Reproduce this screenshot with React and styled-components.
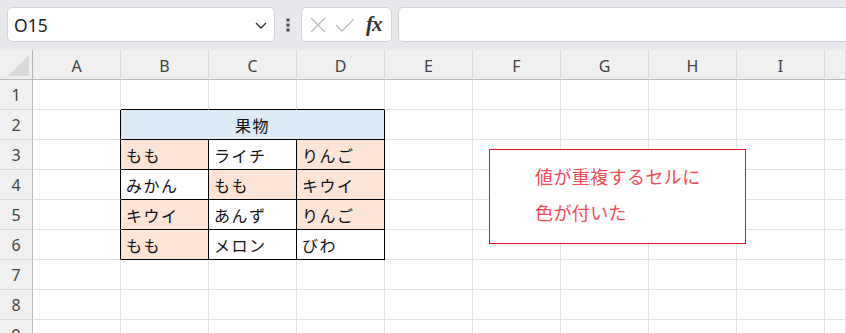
import React from "react";
import styled, { createGlobalStyle } from "styled-components";

const Global = createGlobalStyle`
  html, body { margin: 0; padding: 0; background: #fff; overflow: hidden; }
  body { font-family: "Noto Sans", "Noto Sans CJK JP", sans-serif; }
`;

const Page = styled.div`
  width: 846px;
  height: 333px;
  overflow: hidden;
  position: relative;
  background: #fff;
`;

const Toolbar = styled.div`
  height: 50px;
  background: #e8e9ec;
  display: flex;
  align-items: flex-start;
  padding: 7px 0 0 7px;
  box-sizing: border-box;
`;

const NameBox = styled.div`
  width: 268px;
  height: 35px;
  box-sizing: border-box;
  background: #fff;
  border: 1px solid #d3d4d7;
  border-radius: 5px;
  display: flex;
  align-items: center;
  justify-content: space-between;
  padding: 0 6px 0 6px;
  font-family: "Noto Sans", sans-serif;
  font-size: 17.5px;
  color: #222;
`;

const Dots = styled.div`
  width: 26px;
  height: 35px;
  display: flex;
  align-items: center;
  justify-content: center;
`;

const FxBox = styled.div`
  width: 91px;
  height: 35px;
  box-sizing: border-box;
  background: #fff;
  border: 1px solid #d3d4d7;
  border-radius: 5px;
  display: flex;
  align-items: center;
  padding: 0 0 0 6px;
  gap: 6px;
`;

const Fx = styled.span`
  font-family: "Liberation Serif", "DejaVu Serif", serif;
  font-style: italic;
  font-weight: bold;
  font-size: 21px;
  color: #333;
  margin-left: 4px;
  letter-spacing: -1px;
`;

const FormulaBar = styled.div`
  flex: 1;
  margin-left: 6px;
  height: 35px;
  box-sizing: border-box;
  background: #fff;
  border: 1px solid #d3d4d7;
  border-right: none;
  border-radius: 5px 0 0 5px;
`;

const Sheet = styled.div`
  display: grid;
  grid-template-columns: 33px repeat(9, 88px) 1fr;
  grid-template-rows: repeat(10, 30px) 1fr;
  height: 283px;
`;

const ColHead = styled.div`
  background: #f0f0f0;
  border-right: 1px solid #d9d9d9;
  border-bottom: 1px solid #b9b9b9;
  display: flex;
  align-items: center;
  justify-content: center;
  font-family: "Noto Sans", sans-serif;
  font-size: 16px;
  color: #444;
  padding-top: 2px;
  box-sizing: border-box;
`;

const Corner = styled.div`
  background: #f0f0f0;
  border-right: 1px solid #b9b9b9;
  border-bottom: 1px solid #b9b9b9;
  box-sizing: border-box;
`;

const RowHead = styled.div`
  background: #f0f0f0;
  border-right: 1px solid #b9b9b9;
  border-bottom: 1px solid #d9d9d9;
  display: flex;
  align-items: center;
  justify-content: center;
  font-family: "Noto Sans", sans-serif;
  font-size: 16px;
  color: #444;
  box-sizing: border-box;
`;

const Cell = styled.div`
  grid-column: span ${(p) => p.$span || 1};
  background: ${(p) => p.$bg || "#fff"};
  border-right: 1px solid ${(p) => (p.$r ? "#000" : "#e1e1e1")};
  border-bottom: 1px solid ${(p) => (p.$b ? "#000" : "#e1e1e1")};
  box-sizing: border-box;
  display: flex;
  align-items: center;
  justify-content: ${(p) => (p.$center ? "center" : "flex-start")};
  padding-left: ${(p) => (p.$center ? "0" : "5px")};
  font-family: "Noto Sans CJK JP", sans-serif;
  font-size: 16px;
  letter-spacing: 1.5px;
  color: #111;
  white-space: nowrap;
  overflow: hidden;
`;

const Callout = styled.div`
  position: absolute;
  left: 489px;
  top: 149px;
  width: 257px;
  height: 95px;
  box-sizing: border-box;
  border: 1px solid #e81123;
  background: #fff;
  padding: 8px 0 0 45px;
  font-family: "Noto Sans CJK JP", sans-serif;
  font-size: 18px;
  letter-spacing: 0.4px;
  line-height: 36px;
  color: #f04a56;
`;

const cols = ["A", "B", "C", "D", "E", "F", "G", "H", "I", ""];

const PEACH = "#fce4d6";
const table = [
  [["もも", true], ["ライチ", false], ["りんご", true]],
  [["みかん", false], ["もも", true], ["キウイ", true]],
  [["キウイ", true], ["あんず", false], ["りんご", true]],
  [["もも", true], ["メロン", false], ["びわ", false]],
];

function Row({ n }) {
  const cells = [];
  if (n === 1) {
    cols.forEach((c, i) => {
      cells.push(<Cell key={i} $b={i >= 1 && i <= 3} />);
    });
  } else if (n === 2) {
    cells.push(<Cell key="a" $r />);
    cells.push(
      <Cell key="m" $span={3} $bg="#ddebf7" $r $b $center>
        果物
      </Cell>
    );
    for (let i = 4; i < cols.length; i++) cells.push(<Cell key={i} />);
  } else if (n >= 3 && n <= 6) {
    const row = table[n - 3];
    cells.push(<Cell key="a" $r />);
    row.forEach(([t, hl], i) =>
      cells.push(
        <Cell key={"t" + i} $bg={hl ? PEACH : "#fff"} $r $b>
          {t}
        </Cell>
      )
    );
    for (let i = 4; i < cols.length; i++) cells.push(<Cell key={i} />);
  } else {
    cols.forEach((c, i) => cells.push(<Cell key={i} />));
  }
  return (
    <>
      <RowHead>{n}</RowHead>
      {cells}
    </>
  );
}

export default function App() {
  return (
    <Page>
      <Global />
      <Toolbar>
        <NameBox>
          <span>O15</span>
          <svg width="14" height="10" viewBox="0 0 14 10">
            <path d="M2 3 L7 8 L12 3" fill="none" stroke="#333" strokeWidth="1.3" />
          </svg>
        </NameBox>
        <Dots>
          <svg width="4" height="14" viewBox="0 0 4 14">
            <rect x="0.5" y="0.5" width="3" height="3" fill="#444" />
            <rect x="0.5" y="5.5" width="3" height="3" fill="#444" />
            <rect x="0.5" y="10.5" width="3" height="3" fill="#444" />
          </svg>
        </Dots>
        <FxBox>
          <svg width="20" height="20" viewBox="0 0 20 20">
            <path d="M3 3 L17 17 M17 3 L3 17" stroke="#bdbdbd" strokeWidth="1.4" fill="none" />
          </svg>
          <svg width="22" height="20" viewBox="0 0 22 20">
            <path d="M2 10 L8 16 L20 4" stroke="#bdbdbd" strokeWidth="1.4" fill="none" />
          </svg>
          <Fx>fx</Fx>
        </FxBox>
        <FormulaBar />
      </Toolbar>
      <Sheet>
        <Corner>
          <svg width="33" height="30" viewBox="0 0 33 30" style={{ display: "block" }}>
            <polygon points="29,5 29,26 8,26" fill="#d9d9d9" />
          </svg>
        </Corner>
        {cols.map((c, i) => (
          <ColHead key={i}>{c}</ColHead>
        ))}
        {[1, 2, 3, 4, 5, 6, 7, 8, 9].map((n) => (
          <Row key={n} n={n} />
        ))}
      </Sheet>
      <Callout>
        値が重複するセルに
        <br />
        色が付いた
      </Callout>
    </Page>
  );
}
